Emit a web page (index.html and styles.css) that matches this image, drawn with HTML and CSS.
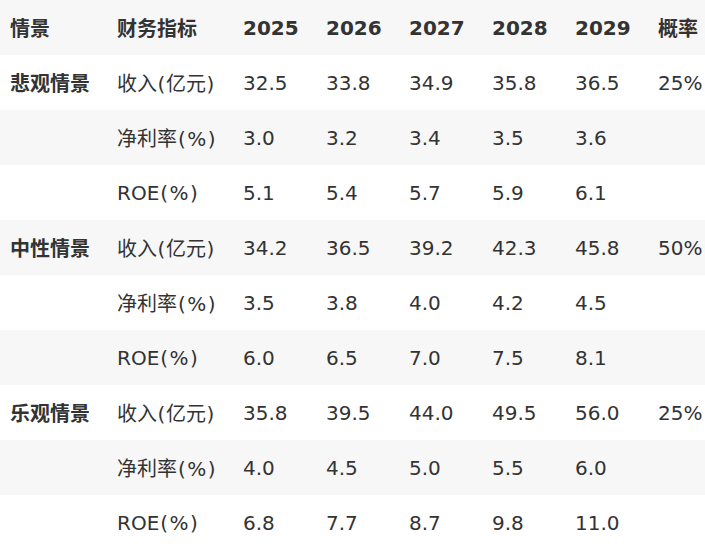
FILE: index.html
```html
<!DOCTYPE html>
<html lang="zh">
<head>
<meta charset="utf-8">
<title>情景分析</title>
<link rel="stylesheet" href="styles.css">
</head>
<body>
<table class="scen">
  <colgroup>
    <col class="c-scene"><col class="c-metric">
    <col class="c-year"><col class="c-year"><col class="c-year"><col class="c-year"><col class="c-year">
    <col class="c-prob">
  </colgroup>
  <thead>
    <tr><th>情景</th><th>财务指标</th><th>2025</th><th>2026</th><th>2027</th><th>2028</th><th>2029</th><th>概率</th></tr>
  </thead>
  <tbody>
    <tr><td class="scene">悲观情景</td><td>收入<span class="p">(</span>亿元<span class="p">)</span></td><td>32.5</td><td>33.8</td><td>34.9</td><td>35.8</td><td>36.5</td><td>25%</td></tr>
    <tr><td></td><td>净利率<span class="u">(%)</span></td><td>3.0</td><td>3.2</td><td>3.4</td><td>3.5</td><td>3.6</td><td></td></tr>
    <tr><td></td><td>ROE<span class="u">(%)</span></td><td>5.1</td><td>5.4</td><td>5.7</td><td>5.9</td><td>6.1</td><td></td></tr>
    <tr><td class="scene">中性情景</td><td>收入<span class="p">(</span>亿元<span class="p">)</span></td><td>34.2</td><td>36.5</td><td>39.2</td><td>42.3</td><td>45.8</td><td>50%</td></tr>
    <tr><td></td><td>净利率<span class="u">(%)</span></td><td>3.5</td><td>3.8</td><td>4.0</td><td>4.2</td><td>4.5</td><td></td></tr>
    <tr><td></td><td>ROE<span class="u">(%)</span></td><td>6.0</td><td>6.5</td><td>7.0</td><td>7.5</td><td>8.1</td><td></td></tr>
    <tr><td class="scene">乐观情景</td><td>收入<span class="p">(</span>亿元<span class="p">)</span></td><td>35.8</td><td>39.5</td><td>44.0</td><td>49.5</td><td>56.0</td><td>25%</td></tr>
    <tr><td></td><td>净利率<span class="u">(%)</span></td><td>4.0</td><td>4.5</td><td>5.0</td><td>5.5</td><td>6.0</td><td></td></tr>
    <tr><td></td><td>ROE<span class="u">(%)</span></td><td>6.8</td><td>7.7</td><td>8.7</td><td>9.8</td><td>11.0</td><td></td></tr>
  </tbody>
</table>
</body>
</html>
```

FILE: styles.css
```css
html, body {
  margin: 0;
  padding: 0;
  overflow: hidden;
  background: #ffffff;
}
.scen {
  border-collapse: collapse;
  table-layout: fixed;
  width: 705px;
  font-family: "DejaVu Sans", "Noto Sans CJK SC", sans-serif;
  font-size: 20px;
  color: #333333;
}
.c-scene { width: 107px; }
.c-metric { width: 126px; }
.c-year { width: 83px; }
.c-prob { width: 57px; }
.scen th, .scen td {
  height: 55px;
  padding: 0 0 0 10px;
  box-sizing: border-box;
  text-align: left;
  vertical-align: middle;
  white-space: nowrap;
}
.scen th { font-weight: bold; }
.scen thead tr { background: #f7f7f7; }
.scen tbody tr:nth-child(even) { background: #f7f7f7; }
.scen td.scene { font-weight: bold; }
.scen .u {
  padding-left: 1px;
  letter-spacing: 1.5px;
}
.scen .p {
  padding: 0 0.6px;
}
```
